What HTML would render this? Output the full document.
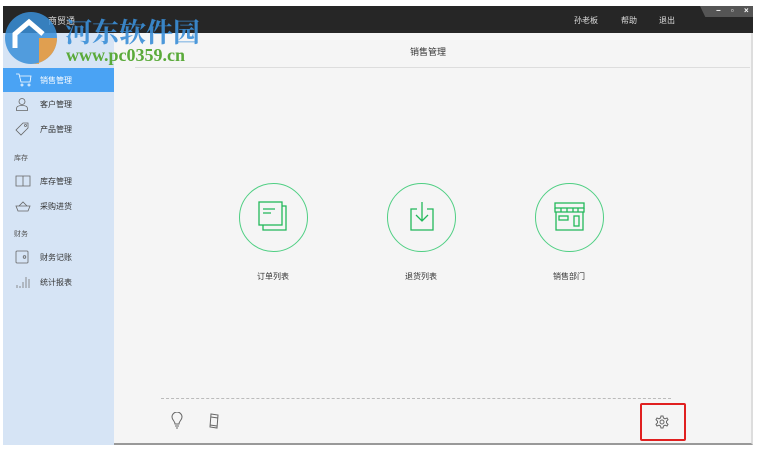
<!DOCTYPE html>
<html><head><meta charset="utf-8"><style>
*{margin:0;padding:0;box-sizing:border-box}
body{width:757px;height:452px;background:#fff;position:relative;overflow:hidden;font-family:"Liberation Sans","Noto Sans CJK SC",sans-serif;font-size:8px;color:#333}
.abs{position:absolute}
#top{left:3px;top:6px;width:750px;height:27px;background:#262626}
#main{left:3px;top:33px;width:750px;height:412px;background:#f5f5f5;border-right:2px solid #ddd;border-bottom:2px solid #999}
#side{left:3px;top:33px;width:111px;height:412px;background:#d6e4f5}
.nav{position:absolute;left:3px;width:111px;height:24px;font-size:8px;color:#333}
.nav span{position:absolute;left:37px;top:7px}
.nav svg{position:absolute;left:12px;top:5px}
.sec{position:absolute;left:14px;font-size:7px;color:#555}
.circ{position:absolute;width:69px;height:69px;border:1px solid #4fcf83;border-radius:50%}
.lbl{position:absolute;font-size:8px;color:#333;width:80px;text-align:center}
.tm{color:#ddd;font-size:8px;top:15px}
</style></head><body>
<div id="top" class="abs"></div>
<div class="abs" style="left:700px;top:6px;width:53px;height:11px;background:#555;clip-path:polygon(0 0,100% 0,100% 100%,10% 100%)"></div>
<div class="abs" style="left:716px;top:6px;color:#fff;font-size:8px;font-weight:bold;letter-spacing:4px">− ▫ ×</div>
<div class="abs tm" style="left:574px">孙老板</div>
<div class="abs tm" style="left:621px">帮助</div>
<div class="abs tm" style="left:659px">退出</div>
<div class="abs" style="left:48px;top:14px;color:#ddd;font-size:9px">商贸通</div>
<div id="main" class="abs"></div>
<div id="side" class="abs"></div>
<div class="abs" style="left:410px;top:45px;font-size:9px;color:#333">销售管理</div>
<div class="abs" style="left:135px;top:67px;width:615px;height:1px;background:#ddd"></div>
<div class="nav" style="top:68px;background:#4aa3f4;color:#fff"><svg width="18" height="14" viewBox="0 0 18 14" fill="none" stroke="#fff" stroke-width=".8"><path d="M1 1h3l2 8h9l1-6H5"/><circle cx="7" cy="12" r="1"/><circle cx="14" cy="12" r="1"/></svg><span>销售管理</span></div>
<div class="nav" style="top:92px"><svg width="14" height="14" viewBox="0 0 14 14" fill="none" stroke="#666" stroke-width=".8"><circle cx="7" cy="4.5" r="3"/><path d="M1.5 13.5v-2c0-2 2-3 5.5-3s5.5 1 5.5 3v2z"/></svg><span>客户管理</span></div>
<div class="nav" style="top:117px"><svg width="14" height="14" viewBox="0 0 14 14" fill="none" stroke="#666" stroke-width=".8"><path d="M8 1h5v5l-7 7-5-5z"/><circle cx="10.5" cy="3.5" r="1"/></svg><span>产品管理</span></div>
<div class="sec" style="top:153px">库存</div>
<div class="nav" style="top:169px"><svg width="16" height="14" viewBox="0 0 16 14" fill="none" stroke="#666" stroke-width=".8"><path d="M1 2h14v10H1zM8 2v10"/></svg><span>库存管理</span></div>
<div class="nav" style="top:194px"><svg width="16" height="14" viewBox="0 0 16 14" fill="none" stroke="#666" stroke-width=".8"><path d="M1 7h14l-2 5H3zM4 7l4-4 4 4"/></svg><span>采购进货</span></div>
<div class="sec" style="top:229px">财务</div>
<div class="nav" style="top:245px"><svg width="14" height="14" viewBox="0 0 14 14" fill="none" stroke="#666" stroke-width=".8"><rect x="1" y="1" width="12" height="12" rx="1"/><circle cx="9.5" cy="7" r="1.3"/></svg><span>财务记账</span></div>
<div class="nav" style="top:270px"><svg width="16" height="14" viewBox="0 0 16 14" fill="none" stroke="#777" stroke-width=".8"><path d="M2 13v-3M5 13v-2M8 13V7M11 13V2M14 13V4"/></svg><span>统计报表</span></div>
<div class="circ" style="left:239px;top:183px"></div>
<div class="circ" style="left:387px;top:183px"></div>
<div class="circ" style="left:535px;top:183px"></div>
<svg class="abs" style="left:256px;top:200px" width="34" height="34" viewBox="0 0 34 34" fill="none" stroke="#22b85a" stroke-width="1.3"><rect x="3" y="2" width="23" height="23"/><path d="M26 6h4v24H7v-5"/><path d="M7 9h12M7 13h8"/></svg>
<svg class="abs" style="left:404px;top:200px" width="34" height="34" viewBox="0 0 34 34" fill="none" stroke="#22b85a" stroke-width="1.3"><path d="M13 9H7v21h22V9h-6"/><path d="M18 2v18M12 15l6 6 6-6"/></svg>
<svg class="abs" style="left:552px;top:200px" width="34" height="34" viewBox="0 0 34 34" fill="none" stroke="#22b85a" stroke-width="1.3"><rect x="3" y="3" width="29" height="5"/><path d="M3 8v4h29V8M9 8v4M15 8v4M21 8v4M26 8v4"/><path d="M4 12v18h27V12"/><rect x="7" y="16" width="9" height="4"/><rect x="22" y="16" width="5" height="10"/></svg>
<div class="lbl" style="left:233px;top:271px">订单列表</div>
<div class="lbl" style="left:381px;top:271px">退货列表</div>
<div class="lbl" style="left:529px;top:271px">销售部门</div>
<div class="abs" style="left:161px;top:398px;width:510px;border-top:1px dashed #bbb"></div>
<svg class="abs" style="left:171px;top:412px" width="12" height="17" viewBox="0 0 12 17" fill="none" stroke="#666"><path d="M4 12c0-3-3-4-3-7a5 5 0 0110 0c0 3-3 4-3 7zM4 14h4M5 16h2"/></svg>
<svg class="abs" style="left:208px;top:413px" width="12" height="16" viewBox="0 0 12 16" fill="none" stroke="#666"><path d="M3 1l7 1-1 13-7-1z"/><path d="M3 4l7 1M2 12l7 1"/></svg>
<div class="abs" style="left:640px;top:403px;width:46px;height:38px;border:2px solid #e02020;border-radius:2px"></div>
<svg class="abs" style="left:655px;top:415px" width="14" height="14" viewBox="0 0 14 14" fill="none" stroke="#666"><circle cx="7" cy="7" r="2"/><path d="M6 1h2l.5 2 1.5.8 2-.8 1 1.7-1.5 1.5v1.6l1.5 1.5-1 1.7-2-.8-1.5.8L8 13H6l-.5-2-1.5-.8-2 .8-1-1.7L2.5 7.8V6.2L1 4.7l1-1.7 2 .8L5.5 3z"/></svg>
<svg class="abs" style="left:3px;top:8px" width="60" height="60" viewBox="0 0 60 60"><circle cx="28" cy="30" r="26" fill="#3a8fd8" opacity=".85"/><path d="M28 56a26 26 0 0026-26H36v26z" fill="#f0a040" opacity=".9"/><path d="M12 40V26l14-12 14 12" fill="none" stroke="#fff" stroke-width="5"/></svg>
<div class="abs" style="left:65px;top:11px;font-size:27px;font-weight:bold;color:#3a8fd8;opacity:.9;font-family:'Noto Serif CJK SC',serif;letter-spacing:0">河东软件园</div>
<div class="abs" style="left:66px;top:45px;font-size:18px;font-weight:bold;color:#5aaa3a;font-family:'Liberation Serif',serif">www.pc0359.cn</div>
</body></html>
